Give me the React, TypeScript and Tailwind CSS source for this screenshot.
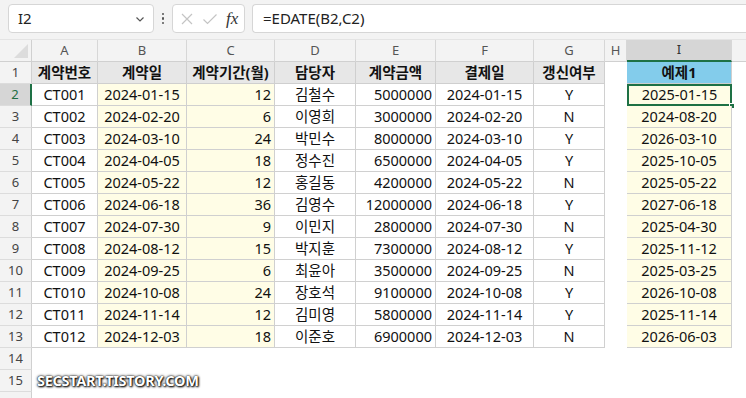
import React from 'react';

const FONT = '"Noto Sans", "Noto Sans CJK KR", sans-serif';

const COLS = [
  { key: 'A', w: 66 },
  { key: 'B', w: 89 },
  { key: 'C', w: 88 },
  { key: 'D', w: 81 },
  { key: 'E', w: 80 },
  { key: 'F', w: 98 },
  { key: 'G', w: 71 },
  { key: 'H', w: 22 },
  { key: 'I', w: 105 },
];

const HEAD = ['계약번호', '계약일', '계약기간(월)', '담당자', '계약금액', '결제일', '갱신여부'];

const ROWS: [string, string, number, string, number, string][] = [
  ['CT001', '2024-01-15', 12, '김철수', 5000000, 'Y'],
  ['CT002', '2024-02-20', 6, '이영희', 3000000, 'N'],
  ['CT003', '2024-03-10', 24, '박민수', 8000000, 'Y'],
  ['CT004', '2024-04-05', 18, '정수진', 6500000, 'Y'],
  ['CT005', '2024-05-22', 12, '홍길동', 4200000, 'N'],
  ['CT006', '2024-06-18', 36, '김영수', 12000000, 'Y'],
  ['CT007', '2024-07-30', 9, '이민지', 2800000, 'N'],
  ['CT008', '2024-08-12', 15, '박지훈', 7300000, 'Y'],
  ['CT009', '2024-09-25', 6, '최윤아', 3500000, 'N'],
  ['CT010', '2024-10-08', 24, '장호석', 9100000, 'Y'],
  ['CT011', '2024-11-14', 12, '김미영', 5800000, 'Y'],
  ['CT012', '2024-12-03', 18, '이준호', 6900000, 'N'],
];

function addMonths(d: string, m: number) {
  const [y, mo, da] = d.split('-').map(Number);
  const t = y * 12 + (mo - 1) + m;
  const ny = Math.floor(t / 12);
  const nm = (t % 12) + 1;
  return `${ny}-${String(nm).padStart(2, '0')}-${String(da).padStart(2, '0')}`;
}

function RowHead({ n, active }: { n?: number; active?: boolean }) {
  return (
    <div
      className={`w-[32px] shrink-0 flex items-center justify-center text-[13px] border-b border-[#dcdcdc] ${
        active ? 'bg-[#d6d6d6] text-[#1e6e42] border-r-2 border-r-[#1e7145]' : 'bg-[#f3f3f3] text-[#444] border-r border-r-[#d0d0d0]'
      }`}
    >
      {n}
    </div>
  );
}

export default function App() {
  return (
    <div className="w-[746px] h-[398px] overflow-hidden bg-white relative" style={{ fontFamily: FONT }}>
      {/* formula bar */}
      <div className="h-[40px] bg-[#f3f3f3] flex items-start pt-[4px] pl-[8px] gap-[7px] border-b border-[#e4e4e4]">
        <div className="w-[146px] h-[29px] bg-white border border-[#d6d6d6] rounded-[4px] flex items-center justify-between pl-[9px] pr-[7px]">
          <span className="text-[15px] text-[#222]">I2</span>
          <svg width="12" height="12" viewBox="0 0 12 12">
            <path d="M2.5 4.5 L6 8 L9.5 4.5" fill="none" stroke="#555" strokeWidth="1.2" />
          </svg>
        </div>
        <div className="h-[29px] flex flex-col items-center justify-center gap-[2px] w-[4px]">
          <span className="w-[2.5px] h-[2.5px] bg-[#555] rounded-full" />
          <span className="w-[2.5px] h-[2.5px] bg-[#555] rounded-full" />
          <span className="w-[2.5px] h-[2.5px] bg-[#555] rounded-full" />
        </div>
        <div className="w-[73px] h-[29px] bg-white border border-[#d6d6d6] rounded-[4px] flex items-center pl-[7px] gap-[8px]">
          <svg width="14" height="14" viewBox="0 0 14 14">
            <path d="M2 2 L12 12 M12 2 L2 12" stroke="#c4c4c4" strokeWidth="1.2" />
          </svg>
          <svg width="16" height="14" viewBox="0 0 16 14">
            <path d="M1.5 7.5 L5.5 11.5 L14.5 2.5" fill="none" stroke="#c4c4c4" strokeWidth="1.2" />
          </svg>
          <span className="text-[17px] italic text-[#333] leading-none" style={{ fontFamily: '"Liberation Serif", serif' }}>
            fx
          </span>
        </div>
        <div className="flex-1 h-[29px] bg-white border border-[#d6d6d6] border-r-0 rounded-l-[4px] flex items-center pl-[10px]">
          <span className="text-[15px] text-[#222]">=EDATE(B2,C2)</span>
        </div>
      </div>

      {/* column headers */}
      <div className="flex h-[22px]">
        <div className="w-[32px] shrink-0 bg-[#f3f3f3] border-r border-b border-[#d0d0d0] relative">
          <svg className="absolute right-[3px] bottom-[3px]" width="14" height="14" viewBox="0 0 14 14">
            <path d="M14 0 L14 14 L0 14 Z" fill="#dcdcdc" />
          </svg>
        </div>
        {COLS.map((c) => (
          <div
            key={c.key}
            style={{ width: c.w }}
            className={`shrink-0 flex items-center justify-center text-[13px] border-r border-[#d7d7d7] ${
              c.key === 'I' ? 'bg-[#d6d6d6] text-[#333] border-b-2 border-b-[#1e7145]' : 'bg-[#f3f3f3] text-[#555] border-b border-b-[#d0d0d0]'
            }`}
          >
            {c.key}
          </div>
        ))}
        <div className="flex-1 bg-[#f3f3f3] border-b border-[#d0d0d0]" />
      </div>

      {/* row 1 */}
      <div className="flex h-[22px] text-[14.5px] text-[#111]">
        <RowHead n={1} />
        {HEAD.map((h, i) => (
          <div
            key={h}
            style={{ width: COLS[i].w }}
            className="shrink-0 flex items-center justify-center font-bold bg-[#e7e7e7] border-r border-b border-[#cfcfcf]"
          >
            {h}
          </div>
        ))}
        <div className="w-[22px] shrink-0" />
        <div className="w-[105px] shrink-0 flex items-center justify-center font-bold bg-[#83cceb] border-r border-b border-[#cfcfcf]">
          예제1
        </div>
      </div>

      {/* data rows */}
      {ROWS.map((r, i) => {
        const cells = [
          { v: r[0], w: 66, a: 'justify-center', bg: 'bg-white' },
          { v: r[1], w: 89, a: 'justify-center', bg: 'bg-[#fffde6]' },
          { v: String(r[2]), w: 88, a: 'justify-end pr-[3px]', bg: 'bg-[#fffde6]' },
          { v: r[3], w: 81, a: 'justify-center', bg: 'bg-white' },
          { v: String(r[4]), w: 80, a: 'justify-end pr-[3px]', bg: 'bg-white' },
          { v: r[1], w: 98, a: 'justify-center', bg: 'bg-white' },
          { v: r[5], w: 71, a: 'justify-center', bg: 'bg-white' },
        ];
        const sel = i === 0;
        return (
          <div key={r[0]} className="flex h-[22px] text-[14.5px] text-[#111]">
            <RowHead n={i + 2} active={sel} />
            {cells.map((c, j) => (
              <div
                key={j}
                style={{ width: c.w }}
                className={`shrink-0 flex items-center ${c.a} ${c.bg} border-r border-b border-[#d0d0d0]`}
              >
                {c.v}
              </div>
            ))}
            <div className="w-[22px] shrink-0" />
            <div
              className={`w-[105px] shrink-0 flex items-center justify-center bg-[#fffde6] relative ${
                sel ? 'border-2 border-[#1e7145]' : 'border-r border-b border-[#d0d0d0]'
              }`}
            >
              {addMonths(r[1], r[2])}
              {sel && <span className="absolute right-[-5px] bottom-[-5px] w-[6px] h-[6px] bg-[#1e7145] border border-white" />}
            </div>
          </div>
        );
      })}

      {[14, 15, 0].map((n) => (
        <div key={n} className="flex h-[22px]">
          <RowHead n={n || undefined} />
          {n === 15 && (
            <div
              className="pl-[5px] flex items-center font-bold text-[14.5px] text-white tracking-[-0.3px]"
              style={{ textShadow: '0 0 3px #000, 1px 1px 2px #000, 0 0 1px #000' }}
            >
              SECSTART.TISTORY.COM
            </div>
          )}
        </div>
      ))}
    </div>
  );
}
